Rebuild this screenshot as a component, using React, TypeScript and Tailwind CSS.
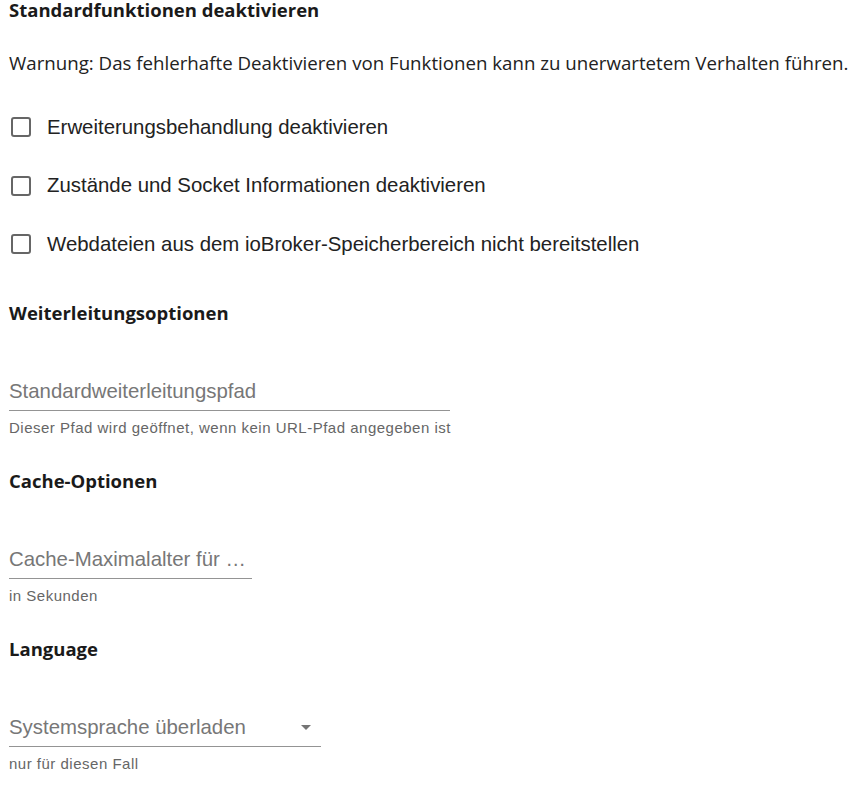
import React, { useState } from 'react';

const heading = "font-['Open_Sans',sans-serif] font-bold text-[18.5px] text-[#1a1a1a] leading-[22px] whitespace-nowrap";
const label = "font-['Liberation_Sans',Arial,sans-serif] text-[20.4px] text-[#222]";

function CheckRow({ text }: { text: string }) {
  const [checked, setChecked] = useState(false);
  return (
    <label className="flex items-center h-[58.5px] cursor-pointer">
      <span
        onClick={() => setChecked(!checked)}
        className="ml-[11px] w-[20px] h-[20px] rounded-[3px] border-2 border-[#666] flex items-center justify-center"
      >
        {checked && <span className="w-[10px] h-[10px] bg-[#666]" />}
      </span>
      <span className={`${label} ml-[16px]`}>{text}</span>
    </label>
  );
}

function TextField({ placeholder, helper, width, select }: { placeholder: string; helper: string; width: string; select?: boolean }) {
  return (
    <div className={width}>
      <div className="flex items-center h-[41px] pt-[3px] border-b border-[#949494]">
        <span className="flex-1 min-w-0 font-['Liberation_Sans',Arial,sans-serif] text-[20.4px] text-[#777] truncate">
          {placeholder}
        </span>
        {select && (
          <svg width="24" height="24" viewBox="0 0 24 24" className="mr-[3px] shrink-0">
            <path d="M7 10l5 5 5-5z" fill="#757575" />
          </svg>
        )}
      </div>
      <div className="mt-[8px] font-['Liberation_Sans',Arial,sans-serif] text-[15px] tracking-[0.5px] text-[#666] leading-[18px] whitespace-nowrap">
        {helper}
      </div>
    </div>
  );
}

export default function App() {
  return (
    <div className="bg-white w-[866px] min-h-[791px] px-[9px]">
      {/* default features */}
      <h2 className={`${heading} -mt-[1px]`}>Standardfunktionen deaktivieren</h2>
      <p className="mt-[30px] font-['Open_Sans',sans-serif] text-[18.7px] text-[#222] leading-[24px] whitespace-nowrap">
        Warnung: Das fehlerhafte Deaktivieren von Funktionen kann zu unerwartetem Verhalten führen.
      </p>
      <div className="-ml-[9px] mt-[23px]">
        <CheckRow text="Erweiterungsbehandlung deaktivieren" />
        <CheckRow text="Zustände und Socket Informationen deaktivieren" />
        <CheckRow text="Webdateien aus dem ioBroker-Speicherbereich nicht bereitstellen" />
      </div>

      {/* redirect */}
      <h2 className={`${heading} mt-[28px]`}>Weiterleitungsoptionen</h2>
      <div className="mt-[46px]">
        <TextField
          placeholder="Standardweiterleitungspfad"
          helper="Dieser Pfad wird geöffnet, wenn kein URL-Pfad angegeben ist"
          width="w-[441px]"
        />
      </div>

      {/* cache */}
      <h2 className={`${heading} mt-[33px]`}>Cache-Optionen</h2>
      <div className="mt-[46px]">
        <TextField placeholder="Cache-Maximalalter für statische Dateien" helper="in Sekunden" width="w-[243px]" />
      </div>

      {/* language */}
      <h2 className={`${heading} mt-[33px]`}>Language</h2>
      <div className="mt-[46px]">
        <TextField placeholder="Systemsprache überladen" helper="nur für diesen Fall" width="w-[312px]" select />
      </div>
    </div>
  );
}
